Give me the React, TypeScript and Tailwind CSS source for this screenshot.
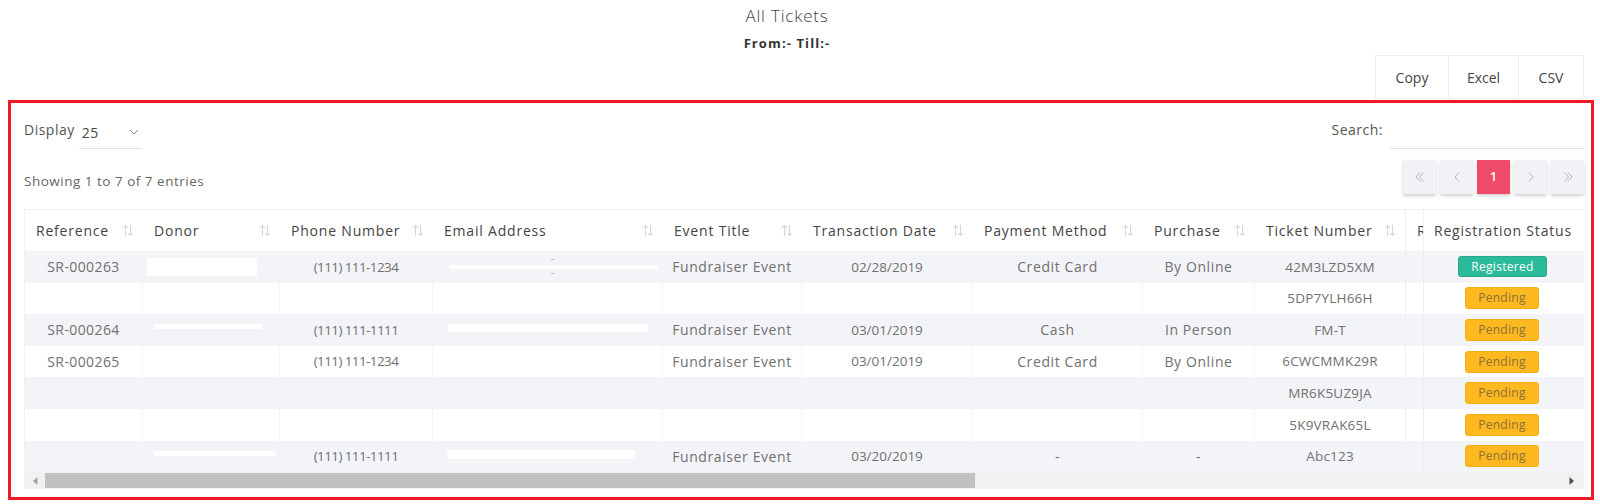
import React from "react";

type Row = {
  ref?: string;
  donor?: "box" | "line" | "line2";
  phone?: string;
  email?: "dash" | "bar" | "bar2";
  event?: string;
  date?: string;
  payment?: string;
  purchase?: string;
  ticket: string;
  status: "Registered" | "Pending";
};

const columns = [
  { label: "Reference", w: "w-[118px]" },
  { label: "Donor", w: "w-[137px]" },
  { label: "Phone Number", w: "w-[153px]" },
  { label: "Email Address", w: "w-[230px]" },
  { label: "Event Title", w: "w-[139px]" },
  { label: "Transaction Date", w: "w-[171px]" },
  { label: "Payment Method", w: "w-[170px]" },
  { label: "Purchase", w: "w-[112px]" },
  { label: "Ticket Number", w: "w-[151px]" },
];

const rows: Row[] = [
  { ref: "SR-000263", donor: "box", phone: "(111) 111-1234", email: "dash", event: "Fundraiser Event", date: "02/28/2019", payment: "Credit Card", purchase: "By Online", ticket: "42M3LZD5XM", status: "Registered" },
  { ticket: "5DP7YLH66H", status: "Pending" },
  { ref: "SR-000264", donor: "line", phone: "(111) 111-1111", email: "bar", event: "Fundraiser Event", date: "03/01/2019", payment: "Cash", purchase: "In Person", ticket: "FM-T", status: "Pending" },
  { ref: "SR-000265", phone: "(111) 111-1234", event: "Fundraiser Event", date: "03/01/2019", payment: "Credit Card", purchase: "By Online", ticket: "6CWCMMK29R", status: "Pending" },
  { ticket: "MR6K5UZ9JA", status: "Pending" },
  { ticket: "5K9VRAK65L", status: "Pending" },
  { donor: "line2", phone: "(111) 111-1111", email: "bar2", event: "Fundraiser Event", date: "03/20/2019", payment: "-", purchase: "-", ticket: "Abc123", status: "Pending" },
];

const SortIcon = () => (
  <svg width="12" height="13" viewBox="0 0 12 13" fill="none" stroke="#d3d6dc" strokeWidth="1.1">
    <path d="M3.5 12V1.5M1.2 3.8l2.3-2.3 2.3 2.3" />
    <path d="M8.5 1v10.5M6.2 9.2l2.3 2.3 2.3-2.3" />
  </svg>
);

const Chevron = ({ dir, double }: { dir: "l" | "r"; double?: boolean }) => (
  <svg width="14" height="14" viewBox="0 0 14 14" fill="none" stroke="#b4b4bc" strokeWidth="1">
    {dir === "l" ? (
      double ? (
        <path d="M7 2.5 3 7l4 4.5M10.5 2.5 6.5 7l4 4.5" />
      ) : (
        <path d="M9 2.5 5 7l4 4.5" />
      )
    ) : double ? (
      <path d="M3.5 2.5 7.5 7l-4 4.5M7 2.5 11 7l-4 4.5" />
    ) : (
      <path d="M5 2.5 9 7l-4 4.5" />
    )}
  </svg>
);

function Cell({ w, children, wide }: { w: string; children?: React.ReactNode; wide?: boolean }) {
  return (
    <div
      className={`${w} shrink-0 h-full flex items-center justify-center whitespace-nowrap border-r border-[#f3f4f7] ${
        wide ? "text-[14px] tracking-[0.6px]" : "text-[13.5px]"
      }`}
    >
      {children}
    </div>
  );
}

function Donor({ kind }: { kind?: Row["donor"] }) {
  if (kind === "box") return <div className="w-[110px] h-[18px] bg-white mr-auto ml-[4px]" />;
  if (kind === "line") return <div className="w-[107px] h-[5px] bg-white mr-auto ml-[12px] mb-[6px]" />;
  if (kind === "line2") return <div className="w-[122px] h-[5px] bg-white mr-auto ml-[11px] mb-[6px]" />;
  return null;
}

function Email({ kind }: { kind?: Row["email"] }) {
  if (kind === "dash")
    return (
      <div className="relative w-[209px] h-[4px] bg-white mr-auto ml-[16px]">
        <div className="absolute left-[102px] top-[-6px] w-[3px] h-px bg-[#bbb]" />
        <div className="absolute left-[102px] top-[8px] w-[3px] h-px bg-[#bbb]" />
      </div>
    );
  if (kind === "bar") return <div className="w-[200px] h-[8px] bg-white mr-auto ml-[15px] mb-[3px]" />;
  if (kind === "bar2") return <div className="w-[188px] h-[9px] bg-white mr-auto ml-[14px] mb-[3px]" />;
  return null;
}

function Badge({ status }: { status: Row["status"] }) {
  if (status === "Registered")
    return (
      <span className="w-[89px] h-[21px] rounded-[3px] bg-[#2bbb9b] border border-[#27a98b] text-white text-[12px] tracking-[0.3px] font-medium flex items-center justify-center ml-[34px]">
        Registered
      </span>
    );
  return (
    <span className="w-[74px] h-[22px] rounded-[3px] bg-[#ffb920] border border-[#f5ad16] text-[#8a6f3a] text-[12px] tracking-[0.3px] font-medium flex items-center justify-center ml-[41px]">
      Pending
    </span>
  );
}

export default function App() {
  return (
    <div className="min-h-screen bg-white font-['Open_Sans',sans-serif] text-[#707070]">
      <div className="pt-[5px] pr-[26px] text-center">
        <h1 className="text-[17px] leading-[22px] font-light tracking-[0.8px] text-[#444]">All Tickets</h1>
        <p className="mt-[8px] text-[13px] leading-[16px] font-bold tracking-[1.1px] text-[#333]">From:- Till:-</p>
      </div>

      <div className="flex justify-end pr-[16px] mt-[4px]">
        <div className="flex h-[44px] border border-[#eceef0] text-[14px] text-[#444]">
          <button className="w-[73px] border-r border-[#eceef0]">Copy</button>
          <button className="w-[70px] border-r border-[#eceef0]">Excel</button>
          <button className="w-[64px]">CSV</button>
        </div>
      </div>

      <div className="ml-[8px] mr-[6px] mt-px border-[3px] border-[#ec1b24] pl-[13px] pr-[7px] pt-[12px] pb-[8px]">
        <div className="flex justify-between items-start">
          <div className="flex items-start text-[14px] tracking-[0.5px] text-[#555]">
            <span className="leading-[30px]">Display</span>
            <div className="ml-[4px] w-[63px] h-[34px] border-b border-[#e2e2e2] flex items-center justify-between pl-[3px] pr-[3px] pt-[1px]">
              <span className="text-[#444]">25</span>
              <svg width="10" height="6" viewBox="0 0 10 6" fill="none" stroke="#888" strokeWidth="1">
                <path d="M1 1l4 4 4-4" />
              </svg>
            </div>
          </div>
          <div className="flex items-start text-[14px] tracking-[0.5px] text-[#555]">
            <span className="leading-[30px]">Search:</span>
            <div className="ml-[7px] w-[194px] h-[34px] border-b border-[#e2e2e2]" />
          </div>
        </div>

        <div className="mt-[11px] flex justify-between items-center">
          <span className="mt-[9px] text-[13.5px] tracking-[0.5px] text-[#666]">Showing 1 to 7 of 7 entries</span>
          <div className="flex gap-[4px]">
            <div className="w-[33px] h-[34px] bg-[#f2f2f6] shadow-[0_2px_3px_rgba(0,0,0,0.18)] flex items-center justify-center"><Chevron dir="l" double /></div>
            <div className="w-[33px] h-[34px] bg-[#f2f2f6] shadow-[0_2px_3px_rgba(0,0,0,0.18)] flex items-center justify-center"><Chevron dir="l" /></div>
            <div className="w-[33px] h-[34px] bg-[#ef4a69] shadow-[0_2px_3px_rgba(0,0,0,0.18)] flex items-center justify-center text-white text-[13px] font-semibold">1</div>
            <div className="w-[33px] h-[34px] bg-[#f2f2f6] shadow-[0_2px_3px_rgba(0,0,0,0.18)] flex items-center justify-center"><Chevron dir="r" /></div>
            <div className="w-[33px] h-[34px] bg-[#f2f2f6] shadow-[0_2px_3px_rgba(0,0,0,0.18)] flex items-center justify-center"><Chevron dir="r" double /></div>
          </div>
        </div>

        <div className="mt-[15px] border-t border-l border-[#eef0f3]">
          <div className="flex h-[41px] bg-white text-[14px] tracking-[0.8px] font-medium text-[#444]">
            <div className="flex-1 overflow-hidden flex">
              {columns.map((c, i) => (
                <div key={c.label} className={`${c.w} shrink-0 flex items-center justify-between pl-[11px] pr-[9px] ${i === 8 ? "border-r border-[#eef0f3]" : ""}`}>
                  <span className="whitespace-nowrap">{c.label}</span>
                  <SortIcon />
                </div>
              ))}
              <div className="w-[40px] shrink-0 flex items-center pl-[11px]">R</div>
            </div>
            <div className="w-[161px] shrink-0 border-l border-[#eef0f3] flex items-center pl-[10px] whitespace-nowrap">Registration Status</div>
          </div>

          {rows.map((r, i) => (
            <div key={i} className={`flex h-[31.6px] ${i % 2 === 0 ? "bg-[#f3f4f7]" : "bg-white"}`}>
              <div className="flex-1 overflow-hidden flex">
                <Cell w="w-[118px]"><span className="text-[14px] tracking-[0.4px]">{r.ref}</span></Cell>
                <Cell w="w-[137px]"><Donor kind={r.donor} /></Cell>
                <Cell w="w-[153px]"><span className="tracking-[-0.6px]">{r.phone}</span></Cell>
                <Cell w="w-[230px]"><Email kind={r.email} /></Cell>
                <Cell w="w-[139px]" wide>{r.event}</Cell>
                <Cell w="w-[171px]">{r.date}</Cell>
                <Cell w="w-[170px]" wide>{r.payment}</Cell>
                <Cell w="w-[112px]" wide>{r.purchase}</Cell>
                <div className="w-[151px] shrink-0 h-full flex items-center justify-center text-[13.5px] tracking-[0.2px] border-r border-[#eceef2]">{r.ticket}</div>
                <div className="w-[40px] shrink-0 h-full" />
              </div>
              <div className="w-[161px] shrink-0 border-l border-[#eceef2] flex items-center">
                <Badge status={r.status} />
              </div>
            </div>
          ))}

          <div className="flex h-[17px] bg-[#f1f1f1]">
            <div className="w-[20px] flex items-center justify-center">
              <svg width="5" height="8" viewBox="0 0 5 8"><path d="M4.5 0v8L0 4z" fill="#a3a3a3" /></svg>
            </div>
            <div className="w-[930px] h-[15px] mt-px bg-[#c1c1c1]" />
            <div className="flex-1 flex items-center justify-end pr-[10px]">
              <svg width="5" height="8" viewBox="0 0 5 8"><path d="M0.5 0v8L5 4z" fill="#505050" /></svg>
            </div>
          </div>
        </div>
      </div>
    </div>
  );
}
